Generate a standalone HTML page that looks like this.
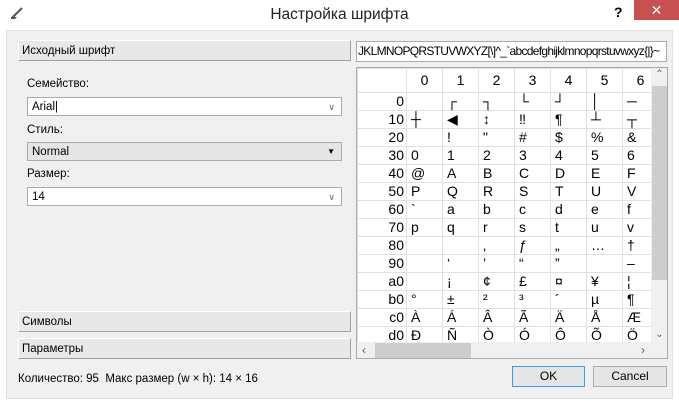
<!DOCTYPE html><html><head><style>
body{margin:0;width:679px;height:405px;background:#fff;font-family:"Liberation Sans",sans-serif;font-size:12px;position:relative;overflow:hidden;color:#000}
.a{position:absolute}
.body{left:6px;top:30px;width:667px;height:369px;background:#f0f0f0;border:1px solid #e0e0e0;box-sizing:border-box}
.hdr{background:#e8e8e8;border-top:1px solid #fff;border-left:1px solid #fff;border-right:1px solid #a0a0a0;border-bottom:1px solid #a0a0a0;box-sizing:border-box;padding-left:3px;line-height:20px;font-size:11.5px}
.cb{background:#fff;border:1px solid #acacac;box-sizing:border-box;padding-left:4px;line-height:18px;font-size:11.5px}
.lbl{font-size:11.5px}
table{border-collapse:collapse;font-size:14px}
td{border:1px solid #e0e0e0;padding:0;height:17px;line-height:17px;width:36px;padding-left:4px;box-sizing:border-box;white-space:nowrap}
td.r{text-align:right;padding-right:2px;width:49px;padding-left:0}
tr.h td{height:24px;text-align:center;padding:0}
</style></head><body>
<svg class="a" style="left:10px;top:6px" width="16" height="14"><path d="M2 12 L12 2" stroke="#555" stroke-width="2"/><path d="M1 11 L7 11 L5 13 L1 13Z" fill="#555"/></svg>
<div class="a" style="left:0;width:679px;top:6px;text-align:center;font-size:15.5px;color:#222">Настройка шрифта</div>
<div class="a" style="left:614px;top:4px;font-weight:bold;font-size:14px">?</div>
<div class="a" style="left:634px;top:0;width:45px;height:20px;background:#c75050;color:#fff;text-align:center;font-size:14px;line-height:20px">✕</div>
<div class="a body"></div>
<div class="a hdr" style="left:18px;top:40px;width:333px;height:21px">Исходный шрифт</div>
<div class="a lbl" style="left:27px;top:78px">Семейство:</div>
<div class="a cb" style="left:27px;top:97px;width:315px;height:19px">Arial|<span style="position:absolute;right:6px;color:#666;font-size:9px">∨</span></div>
<div class="a lbl" style="left:27px;top:124px">Стиль:</div>
<div class="a cb" style="left:27px;top:142px;width:315px;height:19px;background:#e5e5e5">Normal<span style="position:absolute;right:6px;font-size:8px">▼</span></div>
<div class="a lbl" style="left:27px;top:168px">Размер:</div>
<div class="a cb" style="left:27px;top:187px;width:315px;height:19px">14<span style="position:absolute;right:6px;color:#666;font-size:9px">∨</span></div>
<div class="a hdr" style="left:18px;top:311px;width:333px;height:21px">Символы</div>
<div class="a hdr" style="left:18px;top:338px;width:333px;height:21px">Параметры</div>
<div class="a lbl" style="left:18px;top:373px">Количество: 95&nbsp; Макс размер (w × h): 14 × 16</div>
<div class="a cb" style="left:356px;top:41px;width:311px;height:21px;overflow:hidden;white-space:nowrap;padding-left:1px;line-height:19px;font-size:12px;letter-spacing:-0.7px">JKLMNOPQRSTUVWXYZ[\]^_`abcdefghijklmnopqrstuvwxyz{|}~</div>
<div class="a" style="left:356px;top:67px;width:312px;height:292px;background:#fff;border:1px solid #aaa;box-sizing:border-box;overflow:hidden">
<table>
<tr class="h"><td class="r"></td><td>0</td><td>1</td><td>2</td><td>3</td><td>4</td><td>5</td><td>6</td></tr>
<tr><td class="r">0</td><td></td><td>┌</td><td>┐</td><td>└</td><td>┘</td><td>│</td><td>─</td></tr>
<tr><td class="r">10</td><td>┼</td><td>◀</td><td>↕</td><td>‼</td><td>¶</td><td>┴</td><td>┬</td></tr>
<tr><td class="r">20</td><td></td><td>!</td><td>"</td><td>#</td><td>$</td><td>%</td><td>&amp;</td></tr>
<tr><td class="r">30</td><td>0</td><td>1</td><td>2</td><td>3</td><td>4</td><td>5</td><td>6</td></tr>
<tr><td class="r">40</td><td>@</td><td>A</td><td>B</td><td>C</td><td>D</td><td>E</td><td>F</td></tr>
<tr><td class="r">50</td><td>P</td><td>Q</td><td>R</td><td>S</td><td>T</td><td>U</td><td>V</td></tr>
<tr><td class="r">60</td><td>`</td><td>a</td><td>b</td><td>c</td><td>d</td><td>e</td><td>f</td></tr>
<tr><td class="r">70</td><td>p</td><td>q</td><td>r</td><td>s</td><td>t</td><td>u</td><td>v</td></tr>
<tr><td class="r">80</td><td></td><td></td><td>‚</td><td>ƒ</td><td>„</td><td>…</td><td>†</td></tr>
<tr><td class="r">90</td><td></td><td>‘</td><td>’</td><td>“</td><td>”</td><td></td><td>–</td></tr>
<tr><td class="r">a0</td><td></td><td>¡</td><td>¢</td><td>£</td><td>¤</td><td>¥</td><td>¦</td></tr>
<tr><td class="r">b0</td><td>°</td><td>±</td><td>²</td><td>³</td><td>´</td><td>µ</td><td>¶</td></tr>
<tr><td class="r">c0</td><td>À</td><td>Á</td><td>Â</td><td>Ã</td><td>Ä</td><td>Å</td><td>Æ</td></tr>
<tr><td class="r">d0</td><td>Ð</td><td>Ñ</td><td>Ò</td><td>Ó</td><td>Ô</td><td>Õ</td><td>Ö</td></tr>
</table>
<div class="a" style="left:294px;top:0;width:17px;height:274px;background:#f0f0f0"><div class="a" style="left:1px;top:18px;width:15px;height:194px;background:#cdcdcd"></div><div class="a" style="top:1px;width:17px;text-align:center;font-size:10px;color:#606060">⌃</div><div class="a" style="bottom:2px;width:17px;text-align:center;font-size:10px;color:#606060">⌄</div></div>
<div class="a" style="left:0;top:274px;width:311px;height:17px;background:#f0f0f0"><div class="a" style="left:18px;top:1px;width:96px;height:15px;background:#cdcdcd"></div><div class="a" style="left:5px;top:1px;color:#606060">‹</div><div class="a" style="left:284px;top:1px;color:#606060">›</div></div>
</div>
<div class="a" style="left:512px;top:366px;width:73px;height:21px;background:#e5e5e5;border:1px solid #3c9ce8;box-sizing:border-box;text-align:center;line-height:19px">OK</div>
<div class="a" style="left:593px;top:366px;width:74px;height:21px;background:#e5e5e5;border:1px solid #acacac;box-sizing:border-box;text-align:center;line-height:19px">Cancel</div>
</body></html>
